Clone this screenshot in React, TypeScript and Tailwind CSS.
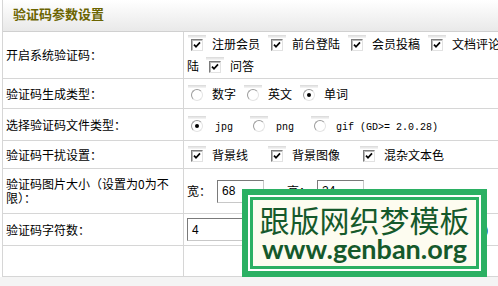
import { FC, ReactNode } from 'react';

const cjk = "font-['Noto_Sans_CJK_SC',sans-serif]";

const Check: FC = () => (
  <span className="inline-flex w-[20px] h-[18px] flex-col items-center shrink-0">
    <span className="h-[3px] w-[18px] bg-gradient-to-b from-[#d8d8d8] to-[#f6f6f6]" />
    <span className="mt-[1px] flex h-[12px] w-[12px] items-center justify-center border border-t-[#7c7c7c] border-l-[#7c7c7c] border-r-[#e2e2e2] border-b-[#e2e2e2] bg-white shadow-[inset_1px_1px_0_#b8b8b8]">
      <svg width="8" height="8" viewBox="0 0 8 8">
        <path d="M1 3.6 L3 5.8 L7 1.4" fill="none" stroke="#000" strokeWidth="1.7" />
      </svg>
    </span>
  </span>
);

const Radio: FC<{ on?: boolean }> = ({ on }) => (
  <span className="inline-flex w-[20px] h-[18px] flex-col items-center shrink-0">
    <span className="h-[3px] w-[18px] bg-gradient-to-b from-[#d8d8d8] to-[#f6f6f6]" />
    <span className="mt-[1px] flex h-[12px] w-[12px] items-center justify-center rounded-full border border-t-[#9c9c9c] border-l-[#9c9c9c] border-r-[#e4e4e4] border-b-[#e4e4e4] bg-white">
      {on && <span className="h-[4px] w-[4px] rounded-full bg-black" />}
    </span>
  </span>
);

const Row: FC<{ label: ReactNode; h: string; children: ReactNode }> = ({ label, h, children }) => (
  <div className={`flex border-b border-[#d6d6d6] ${h}`}>
    <div className="flex w-[181px] shrink-0 items-center border-r border-[#d6d6d6] pl-[3px] leading-[14px]">
      {label}
    </div>
    <div className="flex min-w-0 flex-1 flex-col justify-center pl-[3px] whitespace-nowrap overflow-hidden">
      {children}
    </div>
  </div>
);

const Txt: FC<{ children: ReactNode; ml?: string; mr?: string }> = ({ children, ml = 'ml-[5px]', mr = 'mr-[7px]' }) => (
  <span className={`${ml} ${mr}`}>{children}</span>
);

const Box: FC<{ w: string; value: string }> = ({ w, value }) => (
  <span
    className={`inline-flex h-[23px] ${w} items-center border border-t-[#7a7a7a] border-l-[#7a7a7a] border-r-[#c8c8c8] border-b-[#c8c8c8] bg-white pl-[4px] font-['Liberation_Sans',sans-serif] text-[12px]`}
  >
    {value}
  </span>
);

export default function App() {
  return (
    <div className={`relative h-[286px] w-[498px] overflow-hidden bg-white text-[12px] text-black ${cjk}`}>
      <div className="ml-[2px] border-l border-[#d6d6d6]">
        <div className="flex h-[32px] items-center border-b border-[#d0d0d0] bg-gradient-to-b from-white to-[#e9e9e9] pb-[4px] pl-[10px]">
          <span className="text-[13px] font-bold text-[#6b6400]">验证码参数设置</span>
        </div>

        <Row label="开启系统验证码：" h="h-[47px]">
          <div className="flex h-[22px] items-center">
            <Check />
            <Txt>注册会员</Txt>
            <Check />
            <Txt>前台登陆</Txt>
            <Check />
            <Txt>会员投稿</Txt>
            <Check />
            <Txt>文档评论需登</Txt>
          </div>
          <div className="flex h-[22px] items-center">
            <span className="mr-[6px]">陆</span>
            <Check />
            <Txt>问答</Txt>
          </div>
        </Row>

        <Row label="验证码生成类型：" h="h-[30px]">
          <div className="flex items-center">
            <Radio />
            <Txt>数字</Txt>
            <Radio />
            <Txt>英文</Txt>
            <Radio on />
            <Txt>单词</Txt>
          </div>
        </Row>

        <Row label="选择验证码文件类型：" h="h-[32px]">
          <div className="flex items-center font-['Liberation_Mono',monospace] text-[10px]">
            <Radio on />
            <Txt ml="ml-[8px]" mr="mr-[16px]">
              <span className="relative top-[3px]">jpg</span>
            </Txt>
            <Radio />
            <Txt ml="ml-[7px]" mr="mr-[16px]">
              <span className="relative top-[3px]">png</span>
            </Txt>
            <Radio />
            <Txt ml="ml-[6px]">
              <span className="relative top-[3px] whitespace-pre">gif (GD&gt;= 2.0.28)</span>
            </Txt>
          </div>
        </Row>

        <Row label="验证码干扰设置：" h="h-[28px]">
          <div className="flex items-center">
            <Check />
            <Txt mr="mr-[19px]">背景线</Txt>
            <Check />
            <Txt mr="mr-[19px]">背景图像</Txt>
            <Check />
            <Txt>混杂文本色</Txt>
          </div>
        </Row>

        <Row
          label={
            <span>
              验证码图片大小（设置为0为不
              <br />
              限）：
            </span>
          }
          h="h-[45px]"
        >
          <div className="flex items-center">
            <span className="mr-[6px]">宽：</span>
            <Box w="w-[47px]" value="68" />
            <span className="ml-[23px] mr-[6px]">高：</span>
            <Box w="w-[47px]" value="24" />
          </div>
        </Row>

        <Row label="验证码字符数：" h="h-[32px]">
          <div className="flex items-center">
            <Box w="w-[270px]" value="4" />
            <span className="ml-[6px] font-['Liberation_Sans',sans-serif]">(4-6)</span>
          </div>
        </Row>

        <Row label="" h="h-[31px]">
          <span />
        </Row>
      </div>
      <div className="h-[10px] bg-[#f4f4f4]" />

      <div className="absolute left-[242px] top-[189px] h-[88px] w-[245px] bg-[#2bb063] p-[6px]">
        <div className="h-full w-full border-2 border-white">
          <div className="flex h-full w-full flex-col items-center justify-center border-[3px] border-[#2bb063] bg-[#fdfcf0] text-[#15592b]">
            <span className="text-[30px] leading-[32px]">跟版网织梦模板</span>
            <span className="font-['Lato',sans-serif] text-[27px] font-bold leading-[28px]">www.genban.org</span>
          </div>
        </div>
      </div>
    </div>
  );
}
